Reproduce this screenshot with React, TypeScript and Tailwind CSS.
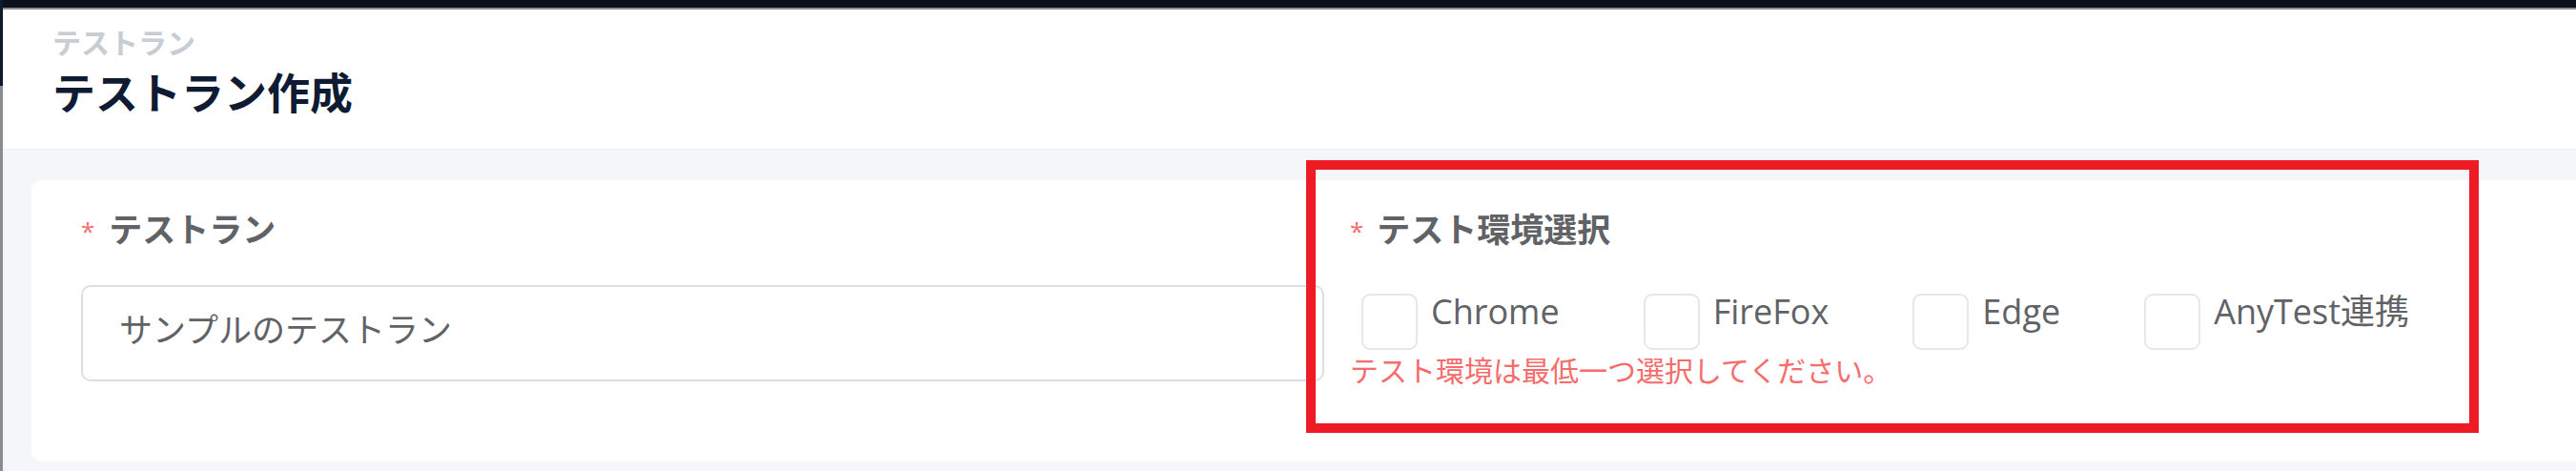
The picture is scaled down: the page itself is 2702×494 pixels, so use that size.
const envs = ["Chrome", "FireFox", "Edge", "AnyTest連携"];

const font = "font-['Open_Sans','Noto_Sans_CJK_JP',sans-serif]";

export default function App() {
  return (
    <div className={`relative flex h-[494px] w-[2702px] overflow-hidden bg-[#f4f6fa] ${font}`}>
      {/* left window edge */}
      <div className="flex w-[3px] flex-col">
        <div className="h-[90px] bg-[#0b1a2c]" />
        <div className="flex-1 bg-[#8a8c90]" />
      </div>

      <div className="flex flex-1 flex-col">
        {/* top bar */}
        <div className="h-[8px] bg-[#0a101c]" />
        <div className="h-[2px] bg-[#8a8d92]" />

        {/* page header */}
        <div className="h-[147px] border-b border-[#eceff3] bg-white pl-[52px] pt-[20px]">
          <p className="text-[30px] font-bold leading-[30px] text-[#c8ccd3]">テストラン</p>
          <h1 className="mt-[15px] text-[45px] font-bold leading-[45px] text-[#0f1b33]">テストラン作成</h1>
        </div>

        {/* form card */}
        <div className="pl-[30px] pt-[32px]">
          <div className="flex h-[295px] gap-[27px] rounded-l-[10px] bg-white pl-[52px] pt-[34px]">
            <div className="w-[1304px]">
              <label className="flex items-start text-[35px] font-bold leading-[35px] text-[#606266]">
                <span className="mr-[15px] mt-[2px] text-[26px] font-normal text-[#f56c6c]">*</span>
                テストラン
              </label>
              <div className="mt-[39px] h-[101px] rounded-[10px] border-2 border-[#dcdfe6] pl-[38px] pt-[27px] text-[35px] leading-[35px] text-[#606266]">
                サンプルのテストラン
              </div>
            </div>

            <div className="flex-1">
              <label className="flex items-start text-[35px] font-bold leading-[35px] text-[#606266]">
                <span className="mr-[14px] mt-[2px] text-[26px] font-normal text-[#f56c6c]">*</span>
                テスト環境選択
              </label>
              <div className="mt-[48px] flex pl-[12px]">
                {envs.map((env) => (
                  <div key={env} className="mr-[88px] flex items-start">
                    <span className="h-[59px] w-[59px] rounded-[9px] border-2 border-[#e4e7ed] bg-white" />
                    <span className="ml-[14px] mt-[1px] text-[36px] leading-[36px] text-[#606266]">{env}</span>
                  </div>
                ))}
              </div>
              <p className="mt-[7px] text-[30px] leading-[30px] text-[#f56c6c]">テスト環境は最低一つ選択してください。</p>
            </div>
          </div>
        </div>
      </div>

      {/* annotation frame */}
      <div className="pointer-events-none absolute left-[1370px] top-[168px] h-[286px] w-[1230px] border-[10px] border-[#ed1c24]" />
    </div>
  );
}
